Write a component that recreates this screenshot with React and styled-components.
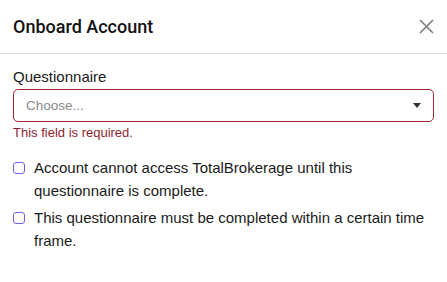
import React from 'react'
import styled, { createGlobalStyle } from 'styled-components'

const GlobalStyle = createGlobalStyle`
  body {
    margin: 0;
    background: #fff;
    font-family: "Liberation Sans", Arial, sans-serif;
    color: #1a1a1a;
  }
`

const Modal = styled.div`
  width: 447px;
  height: 282px;
  background: #fff;
`

const Header = styled.div`
  display: flex;
  align-items: center;
  justify-content: space-between;
  height: 53px;
  padding: 0 13px;
  border-bottom: 1px solid #dedede;
`

const Title = styled.h2`
  margin: 0;
  font-family: Roboto, "Liberation Sans", sans-serif;
  font-size: 18px;
  font-weight: 500;
  color: #111;
`

const CloseButton = styled.button`
  display: flex;
  padding: 0;
  border: 0;
  background: none;
  color: #7a7a7a;
  cursor: pointer;
`

const Body = styled.div`
  padding: 13px 13px;
`

const Label = styled.label`
  display: block;
  font-size: 15px;
  line-height: 20px;
  margin-bottom: 2px;
  color: #1a1a1a;
`

const Select = styled.div`
  display: flex;
  align-items: center;
  justify-content: space-between;
  height: 31px;
  padding: 0 12px;
  border: 1px solid ${props => (props.$invalid ? '#a3263a' : '#ccc')};
  border-radius: 5px;
  font-size: 13.5px;
  color: #8a8a8a;
`

const Caret = styled.span`
  width: 0;
  height: 0;
  border-left: 4px solid transparent;
  border-right: 4px solid transparent;
  border-top: 5px solid #333;
`

const ErrorText = styled.div`
  margin-top: 3px;
  font-size: 13px;
  color: #8e1d2e;
`

const Options = styled.div`
  display: flex;
  flex-direction: column;
  gap: 5px;
  margin-top: 17px;
`

const CheckRow = styled.label`
  display: flex;
  align-items: flex-start;
  gap: 9px;
  font-size: 15px;
  line-height: 22.5px;
  color: #1a1a1a;
`

const Box = styled.input.attrs({ type: 'checkbox' })`
  appearance: none;
  box-sizing: border-box;
  flex: none;
  width: 12px;
  height: 12px;
  margin: 5px 0 0;
  border: 1.5px solid #6a63e6;
  border-radius: 3px;
  background: #fff;
`

const CloseIcon = () => (
  <svg width="15" height="15" viewBox="0 0 15 15" fill="none" stroke="currentColor" strokeWidth="1.6">
    <path d="M1 1l13 13M14 1L1 14" />
  </svg>
)

export default function App () {
  return (
    <Modal>
      <GlobalStyle />
      <Header>
        <Title>Onboard Account</Title>
        <CloseButton aria-label="Close"><CloseIcon /></CloseButton>
      </Header>
      <Body>
        <Label>Questionnaire</Label>
        <Select $invalid>
          <span>Choose...</span>
          <Caret />
        </Select>
        <ErrorText>This field is required.</ErrorText>
        <Options>
          <CheckRow>
            <Box />
            <span>Account cannot access TotalBrokerage until this questionnaire is complete.</span>
          </CheckRow>
          <CheckRow>
            <Box />
            <span>This questionnaire must be completed within a certain time frame.</span>
          </CheckRow>
        </Options>
      </Body>
    </Modal>
  )
}
